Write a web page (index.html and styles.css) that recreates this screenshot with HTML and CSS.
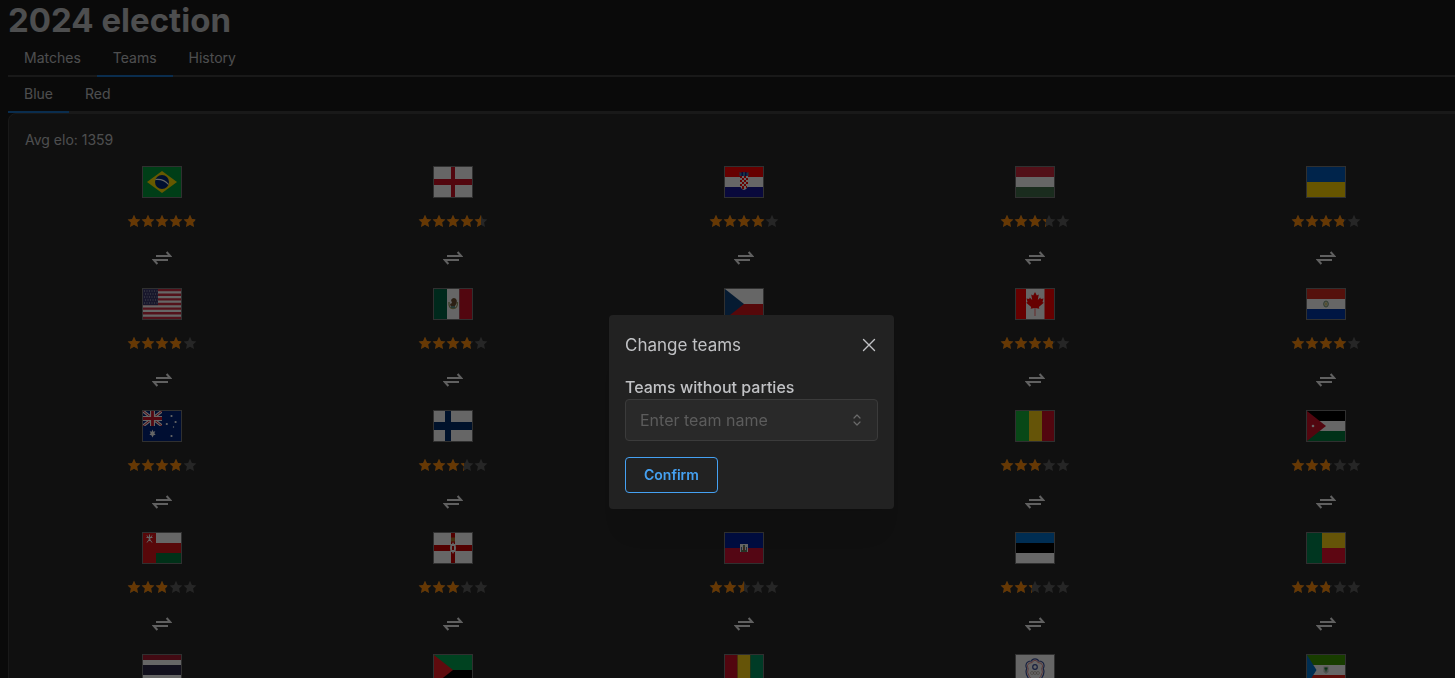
FILE: index.html
```
<!DOCTYPE html>
<html lang="en">
<head>
    <meta charset="UTF-8">
    <meta name="viewport" content="width=device-width, initial-scale=1.0">
    <title>2024 election</title>
    <link rel="stylesheet" href="styles.css">
</head>
<body>
    <!-- Flags and icons -->
    <svg class="symbols" aria-hidden="true">
        <symbol id="star" viewBox="0 0 14 14"><path d="m7 .8 1.900 4.100 4.500.5-3.300 3.100.9 4.500-4-2.200L3 13l.9-4.500L.6 5.400l4.500-.5z" fill="currentColor"/></symbol>
        <symbol id="swap" viewBox="0 0 20 14"><path d="M4 5h14.200L14.600 1M16 9H1.800l3.600 4" fill="none" stroke="currentColor" stroke-width="2"/></symbol>
        <symbol id="br" viewBox="0 0 38 30"><path fill="#009b3a" d="M0 0h38v30H0z"/><path fill="#fedf00" d="M4 15 19 4l15 11-15 11z"/><circle cx="19" cy="15" r="7" fill="#002776"/><path d="M12.500 12.500q8-1 13 5" fill="none" stroke="#fff" stroke-width="1.100"/></symbol>
        <symbol id="en" viewBox="0 0 38 30"><path fill="#fff" d="M0 0h38v30H0z"/><path fill="#ce1124" d="M17 0h4v30h-4zM0 12h38v6H0z"/></symbol>
        <symbol id="hr" viewBox="0 0 38 30"><path fill="#f00" d="M0 0h38v10H0z"/><path fill="#fff" d="M0 10h38v10H0z"/><path fill="#171796" d="M0 20h38v10H0z"/><path fill="#3a80a8" d="M14.500 5l2 1 2.500-1 2.500 1 2-1v4h-9z"/><path fill="#171796" d="M16.500 5h1.500v4h-1.500zM20 5h1.500v4H20z"/><path fill="#fff" d="M15 9h8v8q0 5-4 6-4-1-4-6z"/><path d="M15 9h2v2h-2zM19 9h2v2h-2zM17 11h2v2h-2zM21 11h2v2h-2zM15 13h2v2h-2zM19 13h2v2h-2zM17 15h2v2h-2zM21 15h2v2h-2zM15 17h2v2h-2zM19 17h2v2h-2zM17 19h2v3h-2zM21 19h1v2h-1z" fill="#f00"/></symbol>
        <symbol id="hu" viewBox="0 0 38 30"><path fill="#cd2a3e" d="M0 0h38v10H0z"/><path fill="#fff" d="M0 10h38v10H0z"/><path fill="#436f4d" d="M0 20h38v10H0z"/></symbol>
        <symbol id="ua" viewBox="0 0 38 30"><path fill="#005bbb" d="M0 0h38v15H0z"/><path fill="#ffd500" d="M0 15h38v15H0z"/></symbol>
        <symbol id="us" viewBox="0 0 38 30"><path fill="#fff" d="M0 0h38v30H0z"/><path d="M0 1.150h38M0 5.770h38M0 10.380h38M0 15h38M0 19.610h38M0 24.230h38M0 28.850h38" stroke="#d02f44" stroke-width="2.310"/><path fill="#3c3b6e" d="M0 0h15v16.100H0z"/><path d="M1 2h14M2 5h13M1 8h14M2 11h13M1 14h14" stroke="#fff" stroke-width="1" stroke-dasharray="1 1.500" opacity=".6"/></symbol>
        <symbol id="mx" viewBox="0 0 38 30"><path fill="#006847" d="M0 0h13v30H0z"/><path fill="#fff" d="M13 0h12.500v30H13z"/><path fill="#ce1126" d="M25.500 0H38v30H25.500z"/><path d="M15 13q-.5 6.500 4 6.500 4.800 0 4.500-6.500" fill="none" stroke="#9ca168" stroke-width="1.300"/><path fill="#6e5234" d="M17 11q2-3 4.500-1.500 2 1.500 1 5l-2 3.500h-2.500q-2-1-2-3l2-1z"/><path fill="#5f8f86" d="M17 17h4v2h-4z"/></symbol>
        <symbol id="cz" viewBox="0 0 38 30"><path fill="#fff" d="M0 0h38v15H0z"/><path fill="#d7141a" d="M0 15h38v15H0z"/><path fill="#11457e" d="m0 0 19 15L0 30z"/></symbol>
        <symbol id="ca" viewBox="0 0 38 30"><path fill="#f00" d="M0 0h38v30H0z"/><path fill="#fff" d="M10 0h18.500v30H10z"/><path fill="#f00" d="m19 3-1.800 3.400-2-.8 1 5.400-2.500-2.500-.5 1.500-2.700-.5 1 3.500-1.300.8 5 4.200-.6 1.700 4.100-.6V27h.6v-7.900l4.100.6-.6-1.700 5-4.200-1.300-.8 1-3.500-2.700.5-.5-1.500-2.500 2.500 1-5.400-2 .8z"/></symbol>
        <symbol id="py" viewBox="0 0 38 30"><path fill="#d52b1e" d="M0 0h38v10H0z"/><path fill="#fff" d="M0 10h38v10H0z"/><path fill="#0038a8" d="M0 20h38v10H0z"/><ellipse cx="19" cy="15" rx="2.300" ry="3" fill="#e8e8d8" stroke="#688a65" stroke-width=".9"/><path fill="#c3aa25" d="M18.500 13.500h1v3h-1z"/></symbol>
        <symbol id="au" viewBox="0 0 38 30"><path fill="#00247d" d="M0 0h38v30H0z"/><svg width="19" height="15" viewBox="0 0 19 15"><path d="m0 0 19 15M19 0 0 15" stroke="#fff" stroke-width="3"/><path d="m0 0 19 15M19 0 0 15" stroke="#cf142b"/><path d="M9.500 0v15M0 7.500h19" stroke="#fff" stroke-width="5"/><path d="M9.500 0v15M0 7.500h19" stroke="#cf142b" stroke-width="2.800"/></svg><g fill="#fff"><path d="m9.500 18.500.8 2.200 2-.5-1 2.100 1.300 1.500-2 .4-1.100 2.300-1.100-2.300-2-.4 1.300-1.500-1-2.100 2 .5z"/><circle cx="28.500" cy="5" r="1.100"/><circle cx="23.800" cy="13" r="1.100"/><circle cx="32.600" cy="11" r="1.100"/><circle cx="30.500" cy="16" r=".7"/><circle cx="28.500" cy="25" r="1.100"/></g></symbol>
        <symbol id="fi" viewBox="0 0 38 30"><path fill="#fff" d="M0 0h38v30H0z"/><path fill="#002f6c" d="M11 0h6v30h-6zM0 11h38v8H0z"/></symbol>
        <symbol id="pl" viewBox="0 0 38 30"><path fill="#fff" d="M0 0h38v15H0z"/><path fill="#dc143c" d="M0 15h38v15H0z"/></symbol>
        <symbol id="ml" viewBox="0 0 38 30"><path fill="#14b53a" d="M0 0h13v30H0z"/><path fill="#fcd116" d="M13 0h13v30H13z"/><path fill="#ce1126" d="M26 0h12v30H26z"/></symbol>
        <symbol id="jo" viewBox="0 0 38 30"><path d="M0 0h38v10H0z"/><path fill="#fff" d="M0 10h38v10H0z"/><path fill="#007a3d" d="M0 20h38v10H0z"/><path fill="#ce1126" d="m0 0 19 15L0 30z"/><circle cx="6" cy="15" r="1.300" fill="#fff"/></symbol>
        <symbol id="om" viewBox="0 0 38 30"><path fill="#fff" d="M0 0h38v10H0z"/><path fill="#db161b" d="M0 10h38v10H0z"/><path fill="#007a3d" d="M13 20h25v10H13z"/><path fill="#db161b" d="M0 0h13v30H0z"/><path d="m4 2.500 5 7M9 2.500l-5 7M6.500 1.500V8M3.500 4.500h6" stroke="#fff"/></symbol>
        <symbol id="ni" viewBox="0 0 38 30"><path fill="#fff" d="M0 0h38v30H0z"/><path fill="#c00" d="M17 0h4v30h-4zM0 12h38v6H0z"/><path fill="#fff" d="m19 9 1 2h1.500l.5 4-.5 4H20l-1 2-1-2h-1.500l-.5-4 .5-4H18z"/><path fill="#c00" d="M18 13h2v4h-2z"/><path fill="#b27a28" d="M17 4.500h4v4h-4z"/></symbol>
        <symbol id="ht" viewBox="0 0 38 30"><path fill="#00209f" d="M0 0h38v15H0z"/><path fill="#d21034" d="M0 15h38v15H0z"/><path fill="#fff" d="M15 11h8v8h-8z"/><path fill="#5e8568" d="M18 12h2v2h-2zM16 17h6v2h-6z"/><path fill="#53699a" d="M16 14h1v3h-1zM21 14h1v3h-1z"/><path fill="#8b5f40" d="M18 14h2v4h-2z"/></symbol>
        <symbol id="ee" viewBox="0 0 38 30"><path fill="#0072ce" d="M0 0h38v10H0z"/><path d="M0 10h38v10H0z"/><path fill="#fff" d="M0 20h38v10H0z"/></symbol>
        <symbol id="bj" viewBox="0 0 38 30"><path fill="#008751" d="M0 0h15v30H0z"/><path fill="#fcd116" d="M15 0h23v15H15z"/><path fill="#e8112d" d="M15 15h23v15H15z"/></symbol>
        <symbol id="th" viewBox="0 0 38 30"><path fill="#a51931" d="M0 0h38v30H0z"/><path fill="#fff" d="M0 5h38v20H0z"/><path fill="#2d2a4a" d="M0 10h38v10H0z"/></symbol>
        <symbol id="mq" viewBox="0 0 38 30"><path fill="#00a650" d="M0 0h38v15H0z"/><path d="M0 15h38v15H0z"/><path fill="#ed1c24" d="m0 0 19 15L0 30z"/></symbol>
        <symbol id="gn" viewBox="0 0 38 30"><path fill="#ce1126" d="M0 0h12.500v30H0z"/><path fill="#fcd116" d="M12.500 0h13v30h-13z"/><path fill="#009460" d="M25.500 0H38v30H25.500z"/></symbol>
        <symbol id="tw" viewBox="0 0 38 30"><path fill="#fff" d="M0 0h38v30H0z"/><path d="M15.500 6Q16 3.800 19 3.800T22.500 6q5 .2 5.500 4 .3 2-.8 3.500 2 4-1.200 9-2 4-7 4.500-5-.5-7-4.500-3.200-5-1.200-9Q9.700 12 10 10q.5-3.800 5.500-4z" fill="none" stroke="#3b509c" stroke-width="1.200"/><path d="M16.200 7.500Q17 5.300 19 5.300t2.800 2.200q4.300 0 4.700 3 .2 1.500-.8 3 2 3.500-1 8-2 3.500-5.700 4-3.700-.5-5.700-4-3-4.500-1-8-1-1.500-.8-3 .4-3 4.700-3z" fill="none" stroke="#dc6d74" stroke-width=".8"/><circle cx="19" cy="12" r="2.300" fill="none" stroke="#3b509c" stroke-width="1.200"/><path d="M14.500 18a1.500 1.500 0 1 0 3 0 1.500 1.500 0 1 0-3 0M17.500 18a1.500 1.500 0 1 0 3 0 1.500 1.500 0 1 0-3 0M20.500 18a1.500 1.500 0 1 0 3 0 1.500 1.500 0 1 0-3 0" fill="none" stroke="#aa9c91" stroke-width=".6"/></symbol>
        <symbol id="gq" viewBox="0 0 38 30"><path fill="#3e9a00" d="M0 0h38v10H0z"/><path fill="#fff" d="M0 10h38v10H0z"/><path fill="#e32118" d="M0 20h38v10H0z"/><path fill="#0073ce" d="m0 0 9.500 15L0 30z"/><path fill="#c9cec5" d="M16.500 11.500h5V17l-2.500 2-2.500-2z"/><path fill="#157a34" d="M17.500 12.500h3v2h-3zM18.500 14h1v2.500h-1z"/></symbol>
    </svg>

    <main class="app">
        <h1>2024 election</h1>
        <nav class="tabs">
            <button type="button" class="tab">Matches</button>
            <button type="button" class="tab active">Teams</button>
            <button type="button" class="tab">History</button>
        </nav>
        <nav class="tabs">
            <button type="button" class="tab active">Blue</button>
            <button type="button" class="tab">Red</button>
        </nav>
        <section class="panel">
            <p class="elo">Avg elo: 1359</p>
            <div class="teams" id="teams"></div>
        </section>
    </main>

    <!-- Change teams modal -->
    <div class="overlay">
        <div class="modal" role="dialog" aria-modal="true" aria-labelledby="modal-title">
            <header class="modal-header">
                <h2 id="modal-title">Change teams</h2>
                <button type="button" class="close" aria-label="Close">
                    <svg width="18" height="18" viewBox="0 0 18 18"><path d="m3.500 3.500 11 11m0-11-11 11" stroke="currentColor" stroke-width="1.400" stroke-linecap="round"/></svg>
                </button>
            </header>
            <form>
                <label for="team">Teams without parties</label>
                <div class="select">
                    <input type="text" id="team" placeholder="Enter team name" autocomplete="off">
                    <svg width="12" height="14" viewBox="0 0 12 14" aria-hidden="true"><path d="m3 5 3-3 3 3M3 9l3 3 3-3" fill="none" stroke="currentColor" stroke-width="1.200" stroke-linecap="round" stroke-linejoin="round"/></svg>
                </div>
                <button type="button" class="confirm">Confirm</button>
            </form>
        </div>
    </div>

    <script>
        // Flag id and rating of every team
        var teams = [
            ["br", 4.8], ["en", 4.5], ["hr", 4], ["hu", 3.3], ["ua", 3.8],
            ["us", 3.8], ["mx", 3.8], ["cz", 3.8], ["ca", 3.8], ["py", 4],
            ["au", 3.8], ["fi", 3.3], ["pl", 3], ["ml", 3], ["jo", 2.8],
            ["om", 2.8], ["ni", 3], ["ht", 2.5], ["ee", 2.3], ["bj", 2.8],
            ["th", 2.8], ["mq", 2.5], ["gn", 2.5], ["tw", 2.3], ["gq", 2.3]
        ];

        var star = '<svg><use href="#star"/></svg>';
        var stars = star.repeat(5);

        document.getElementById("teams").innerHTML = teams.map(function (team) {
            return `<div class="team">
                <svg class="flag"><use href="#${team[0]}"/></svg>
                <div class="rating" role="img" aria-label="${team[1]} of 5">
                    <div class="stars">${stars}</div>
                    <div class="stars filled" style="width: ${team[1] * 20}%">${stars}</div>
                </div>
                <button type="button" class="swap" aria-label="Change team"><svg><use href="#swap"/></svg></button>
            </div>`;
        }).join("");
    </script>
</body>
</html>
```
FILE: styles.css
```
* {
    box-sizing: border-box;
}

body {
    margin: 0;
    height: 100vh;
    overflow: hidden;
    background-color: #1b1b1b;
    color: #c1c2c5;
    font-family: Inter, sans-serif;
    font-size: 14px;
    line-height: 20px;
}

button, input {
    font: inherit;
}

button {
    background: none;
    border: none;
    padding: 0;
    color: inherit;
    cursor: pointer;
}

svg {
    display: block;
}

.symbols {
    display: none;
}

.app {
    width: max-content;
    margin-left: 8px;
}

h1 {
    margin: 0;
    font-size: 33px;
    font-weight: 700;
    line-height: 41px;
}

.tabs {
    display: flex;
    border-bottom: 2px solid #404040;
}

.tab {
    height: 36px;
    margin-bottom: -2px;
    padding: 0 16px;
    border-bottom: 2px solid transparent;
}

.tab.active {
    border-color: #1971c2;
}

.panel {
    padding: 16px;
    border: 1px solid #404040;
    border-radius: 8px;
    background-color: #282828;
}

.elo {
    margin: 0 0 16px;
}

/* Team grid */
.teams {
    display: grid;
    grid-template-columns: repeat(5, 1fr);
    gap: 16px;
    width: calc(100vw - 17px);
}

.team {
    display: flex;
    flex-direction: column;
    align-items: center;
    gap: 16px;
}

.flag {
    width: 40px;
    height: 32px;
    border: 1px solid #787878;
}

.rating {
    position: relative;
    width: 70px;
}

.stars {
    display: flex;
    overflow: hidden;
    color: #606060;
}

.stars svg {
    flex: none;
    width: 14px;
    height: 14px;
}

.stars.filled {
    position: absolute;
    top: 0;
    left: 0;
    color: #ff8c0a;
}

.swap {
    display: flex;
    align-items: center;
    justify-content: center;
    width: 28px;
    height: 28px;
    color: #f0f0f0;
}

.swap svg {
    width: 20px;
    height: 14px;
}

/* Modal */
.overlay {
    position: fixed;
    inset: 0;
    display: flex;
    align-items: flex-start;
    justify-content: center;
    padding: 315px 0 0 48px;
    background-color: rgba(0, 0, 0, 0.6);
}

.modal {
    padding: 16px;
    border-radius: 4px;
    background-color: #222222;
    box-shadow: 0 1px 3px rgba(0, 0, 0, 0.05), 0 36px 28px -7px rgba(0, 0, 0, 0.05), 0 17px 17px -7px rgba(0, 0, 0, 0.04);
}

.modal-header {
    display: flex;
    align-items: center;
    justify-content: space-between;
    height: 28px;
    margin-bottom: 16px;
}

.modal-header h2 {
    margin: 0;
    font-size: 17px;
    font-weight: 400;
}

.modal label {
    display: block;
    font-size: 16px;
    font-weight: 500;
    line-height: 24px;
}

.select {
    display: flex;
    align-items: center;
    width: 253px;
    height: 42px;
    margin-bottom: 16px;
    padding: 0 14px;
    border: 1px solid #3b3b3b;
    border-radius: 4px;
    background-color: #292929;
    color: #6a6a6a;
}

.select input {
    flex: 1;
    min-width: 0;
    padding: 0;
    border: none;
    outline: none;
    background: none;
    color: #c1c2c5;
    font-size: 16px;
}

.select input::placeholder {
    color: #5c5c5c;
}

.confirm {
    height: 36px;
    padding: 0 18px;
    border: 1px solid #45a1f2;
    border-radius: 4px;
    color: #45a1f2;
    font-weight: 600;
}
```
